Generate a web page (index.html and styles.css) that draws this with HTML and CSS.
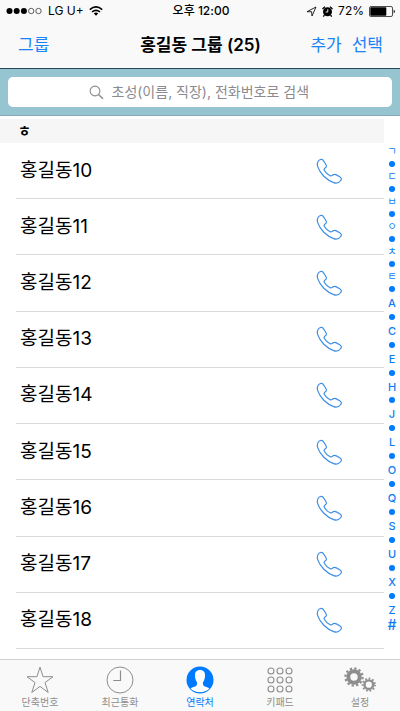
FILE: index.html
```html
<!DOCTYPE html>
<html lang="ko">
<head>
<meta charset="utf-8">
<meta name="viewport" content="width=device-width, initial-scale=1">
<title>홍길동 그룹</title>
<link rel="stylesheet" href="styles.css">
</head>
<body>
<svg class="defs" aria-hidden="true">
  <symbol id="phone" viewBox="0 0 26 26">
    <path d="M2.2 3.2C3.2 1.6 5.8.6 7 2.2L9.6 6C10.8 7.7 10.7 9 9.1 10.1C8 10.9 7.8 11.5 8.4 12.5C9.8 14.9 11.8 16.8 14.1 17.8C15.1 18.2 15.6 18 16.4 17.3C17.6 16.3 19 16.2 20.4 16.9L24 19C25.6 20 25.7 21.3 24.8 22.5C23.3 24.6 20.6 25.6 17.7 24.6C10.5 22.1 4 15.4 1.7 8.6C1 6.4 1.2 4.8 2.2 3.2Z"/>
  </symbol>
</svg>
<div class="app">
  <header class="header">
    <div class="status">
      <div class="status-side">
        <svg class="signal" viewBox="0 0 37 8"><g fill="#000"><circle cx="3.5" cy="4" r="3"/><circle cx="10.7" cy="4" r="3"/><circle cx="17.9" cy="4" r="3"/></g><g fill="none" stroke="#222" stroke-width=".7"><circle cx="25.2" cy="4" r="2.7"/><circle cx="32.5" cy="4" r="2.7"/></g></svg>
        <span>LG U+</span>
        <svg class="wifi" viewBox="0 0 14 10"><g fill="none" stroke="#000" stroke-width="1.6"><path d="M.8 3.6Q7-1.8 13.2 3.6M3 6Q7 2.6 11 6"/></g><path d="M4.8 7.4Q7 5.6 9.2 7.4L7 9.8Z"/></svg>
      </div>
      <span class="time">오후 12:00</span>
      <div class="status-side status-end">
        <svg class="locate" viewBox="0 0 11 11"><path d="M1 5.7L10 1L6 10L5.6 5.7Z" fill="none" stroke="#111" stroke-width=".9"/></svg>
        <svg class="alarm" viewBox="0 0 11 11"><circle cx="5.5" cy="5.8" r="4.5"/><path d="M.5 3L3 .6M10.5 3L8 .6M2.4 9L1.3 10.6M8.6 9L9.7 10.6" stroke="#000" stroke-width="1.3"/><path d="M5.8 3.2V6H3.6" fill="none" stroke="#fff" stroke-width=".9"/></svg>
        <span>72%</span>
        <svg class="battery" viewBox="0 0 27 11"><rect x=".5" y=".5" width="23" height="10" rx="1.5" fill="none" stroke="#222" stroke-width=".8"/><rect x="1.3" y="1.3" width="16" height="8.4" rx=".7"/><path d="M24.7 3.5Q27 5.5 24.7 7.5Z"/></svg>
      </div>
    </div>
    <div class="navbar">
      <div class="nav-side"><button type="button">그룹</button></div>
      <h1>홍길동 그룹 (25)</h1>
      <div class="nav-side nav-end"><button type="button">추가</button><button type="button">선택</button></div>
    </div>
  </header>
  <form class="search" role="search">
    <label class="search-box">
      <svg viewBox="0 0 15 15" aria-hidden="true"><g fill="none" stroke="#8b8b90"><circle cx="6" cy="6" r="4.9" stroke-width="1.1"/><path d="M9.7 9.7L14 13.7" stroke-width="1.5"/></g></svg>
      <input type="text" aria-label="연락처 검색" placeholder="초성(이름, 직장), 전화번호로 검색">
    </label>
  </form>
  <main class="content">
    <section class="contacts">
      <h2>ㅎ</h2>
      <ul>
        <li><span>홍길동10</span><button type="button" aria-label="홍길동10 전화"><svg><use href="#phone"/></svg></button></li>
        <li><span>홍길동11</span><button type="button" aria-label="홍길동11 전화"><svg><use href="#phone"/></svg></button></li>
        <li><span>홍길동12</span><button type="button" aria-label="홍길동12 전화"><svg><use href="#phone"/></svg></button></li>
        <li><span>홍길동13</span><button type="button" aria-label="홍길동13 전화"><svg><use href="#phone"/></svg></button></li>
        <li><span>홍길동14</span><button type="button" aria-label="홍길동14 전화"><svg><use href="#phone"/></svg></button></li>
        <li><span>홍길동15</span><button type="button" aria-label="홍길동15 전화"><svg><use href="#phone"/></svg></button></li>
        <li><span>홍길동16</span><button type="button" aria-label="홍길동16 전화"><svg><use href="#phone"/></svg></button></li>
        <li><span>홍길동17</span><button type="button" aria-label="홍길동17 전화"><svg><use href="#phone"/></svg></button></li>
        <li><span>홍길동18</span><button type="button" aria-label="홍길동18 전화"><svg><use href="#phone"/></svg></button></li>
      </ul>
    </section>
    <nav class="index" aria-label="색인">
      <a class="ko" href="#">ㄱ</a><i></i><a class="ko" href="#">ㄷ</a><i></i><a class="ko" href="#">ㅂ</a><i></i><a class="ko" href="#">ㅇ</a><i></i><a class="ko" href="#">ㅊ</a><i></i><a class="ko" href="#">ㅌ</a><i></i>
      <a href="#">A</a><i></i><a href="#">C</a><i></i><a href="#">E</a><i></i><a href="#">H</a><i></i><a href="#">J</a><i></i><a href="#">L</a><i></i><a href="#">O</a><i></i><a href="#">Q</a><i></i><a href="#">S</a><i></i><a href="#">U</a><i></i><a href="#">X</a><i></i><a href="#">Z</a><a class="hash" href="#">#</a>
    </nav>
  </main>
  <nav class="tabs">
    <a href="#"><svg viewBox="0 0 28 28"><path d="M14 1.2L17.1 10.7H27L19 16.6L22.2 26.5L14 20.4L5.8 26.5L9 16.6L1 10.7H10.9Z" fill="none" stroke="currentColor"/></svg>단축번호</a>
    <a href="#"><svg viewBox="0 0 28 28"><g fill="none" stroke="currentColor"><circle cx="14" cy="14" r="13"/><path d="M14.5 4.5V14.5H7.3" stroke-width="1.2"/></g></svg>최근통화</a>
    <a class="active" href="#" aria-current="page"><svg viewBox="0 0 28 28"><circle cx="14" cy="14" r="13.5" fill="currentColor"/><path d="M14 4C10.4 4 8.7 6.4 9 9.8C9.1 10.7 8.8 11.5 9.3 12.2C9.8 14.5 10.7 15.5 11.1 16.7C11.4 19 10.5 20 8.3 20.8C6.7 21.4 5.4 21.9 4.6 22.6C9.7 27.6 18.3 27.6 23.4 22.6C22.6 21.9 21.3 21.4 19.7 20.8C17.5 20 16.6 19 16.9 16.7C17.3 15.5 18.2 14.5 18.7 12.2C19.2 11.5 18.9 10.7 19 9.8C19.3 6.4 17.6 4 14 4Z" fill="#fff"/></svg>연락처</a>
    <a href="#"><svg viewBox="0 0 28 28"><g fill="none" stroke="currentColor" stroke-width="1.1"><circle cx="5" cy="5" r="3"/><circle cx="14" cy="5" r="3"/><circle cx="23" cy="5" r="3"/><circle cx="5" cy="14" r="3"/><circle cx="14" cy="14" r="3"/><circle cx="23" cy="14" r="3"/><circle cx="5" cy="23" r="3"/><circle cx="14" cy="23" r="3"/><circle cx="23" cy="23" r="3"/></g></svg>키패드</a>
    <a href="#"><svg class="gears" viewBox="0 0 32 28"><g fill="none" stroke="currentColor"><circle cx="10" cy="11" r="5.7" stroke-width="4"/><circle cx="10" cy="11" r="8.6" stroke-width="2.2" stroke-dasharray="2.3 2.203"/><circle cx="24.8" cy="18.7" r="4.3" stroke-width="2.4"/><circle cx="24.8" cy="18.7" r="6.2" stroke-width="1.8" stroke-dasharray="1.7 1.84"/></g></svg>설정</a>
  </nav>
</div>
</body>
</html>
```
FILE: styles.css
```css
* {
  box-sizing: border-box;
}

body {
  margin: 0;
  background: #fff;
  color: #000;
  font-family: Inter, "Noto Sans CJK KR", sans-serif;
}

button {
  padding: 0;
  border: 0;
  background: none;
  color: #1b83f5;
  font: inherit;
}

a {
  color: inherit;
  text-decoration: none;
}

svg {
  display: block;
  flex: none;
}

.defs {
  display: none;
}

.app {
  display: flex;
  flex-direction: column;
  min-height: 100vh;
}

.header {
  border-bottom: 1px solid #23495a;
  background: #f9f9f9;
}

.status {
  display: flex;
  align-items: center;
  height: 22px;
  padding: 0 4px 0 6px;
  font-size: 12px;
  line-height: 20px;
}

.status-side {
  display: flex;
  flex: 1;
  align-items: center;
  gap: 5px;
}

.status-end {
  justify-content: flex-end;
}

.time {
  font-weight: 500;
}

.signal {
  width: 37px;
  height: 8px;
}

.wifi {
  width: 14px;
  height: 10px;
}

.locate,
.alarm {
  width: 11px;
  height: 11px;
}

.battery {
  width: 27px;
  height: 11px;
}

.navbar {
  display: flex;
  align-items: center;
  height: 46px;
  padding: 0 17px 0 18px;
  font-size: 17px;
  line-height: 24px;
}

.navbar h1 {
  margin: 0;
  font-size: 17px;
  font-weight: 600;
}

.nav-side {
  display: flex;
  flex: 1;
  gap: 10px;
}

.nav-end {
  justify-content: flex-end;
}

.search {
  padding: 8px;
  border-bottom: 1px solid #82a9b4;
  background: #97c4d1;
}

.search-box {
  display: flex;
  align-items: center;
  justify-content: center;
  gap: 8px;
  height: 30px;
  border-radius: 5px;
  background: #fff;
}

.search-box svg {
  width: 15px;
  height: 15px;
}

.search-box input {
  width: 200px;
  padding: 0;
  border: 0;
  outline: 0;
  background: none;
  font: inherit;
  font-size: 14px;
  line-height: 20px;
}

.search-box input::placeholder {
  color: #8b8b90;
  opacity: 1;
}

.content {
  display: flex;
  flex: 1;
  padding: 3px 0 10px;
}

.contacts {
  display: flex;
  flex: 1;
  flex-direction: column;
}

.contacts h2 {
  margin: 0;
  padding-left: 18px;
  background: #f6f6f6;
  font-size: 14px;
  font-weight: 600;
  line-height: 24px;
}

.contacts ul {
  display: grid;
  flex: 1;
  grid-auto-rows: 1fr;
  margin: 0 0 0 16px;
  padding: 0;
  list-style: none;
}

.contacts li {
  display: flex;
  align-items: center;
  justify-content: space-between;
  padding: 0 42px 0 4px;
  border-bottom: 1px solid #d9d9db;
  font-size: 19px;
  line-height: 28px;
}

.contacts li svg {
  width: 26px;
  height: 26px;
  fill: none;
  stroke: #3f8ee6;
  stroke-width: 1.2;
}

.index {
  display: flex;
  flex-direction: column;
  width: 16px;
  padding: 27px 0 16px;
  color: #0f7cf0;
  font-size: 11px;
  font-weight: 500;
}

.index a,
.index i {
  display: flex;
  flex: 14 1 0;
  align-items: center;
  justify-content: center;
  min-height: 0;
  line-height: 10px;
}

.index .ko {
  flex-grow: 11;
  font-size: 10px;
  font-weight: 400;
}

.index .hash {
  flex-grow: 16;
  font-size: 14px;
}

.index i::before {
  width: 6px;
  height: 6px;
  border-radius: 50%;
  background: #007aff;
  content: "";
}

.tabs {
  display: grid;
  grid-template-columns: repeat(5, 1fr);
  padding: 6px 0 1px;
  border-top: 1px solid #d0d0d2;
  background: #f9f9f9;
  color: #8e8e8e;
  font-size: 10px;
  line-height: 16px;
}

.tabs a {
  display: flex;
  flex-direction: column;
  align-items: center;
}

.tabs svg {
  width: 28px;
  height: 28px;
}

.tabs .gears {
  width: 32px;
}

.tabs .active {
  color: #007aff;
}
```
